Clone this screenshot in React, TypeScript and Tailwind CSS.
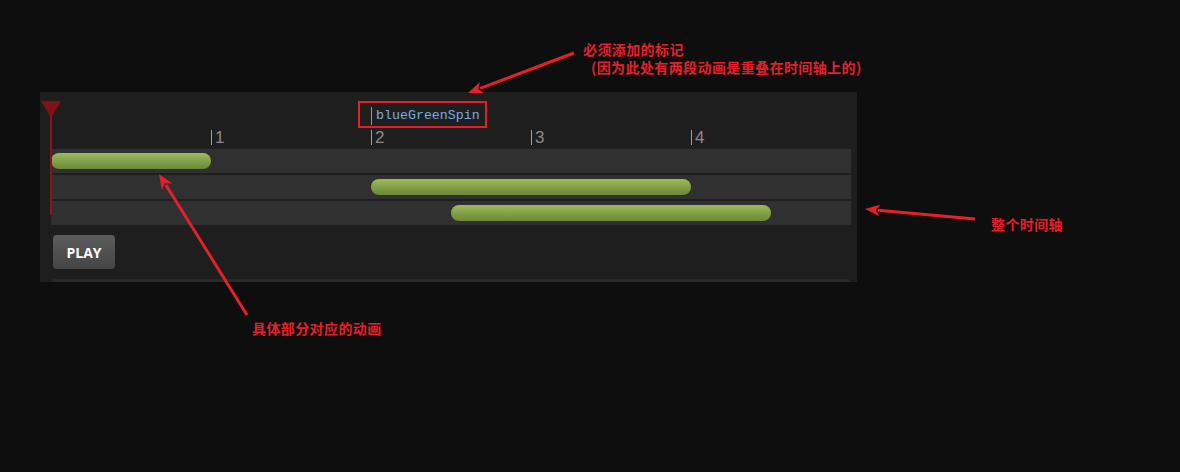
import React from "react";

const PX_PER_SEC = 160;

const tracks = [
  { start: 0, end: 1 },
  { start: 2, end: 4 },
  { start: 2.5, end: 4.5 },
];

const cjk = { fontFamily: '"Noto Sans CJK SC", "Noto Sans", sans-serif' };

const Arrow = ({ x1, y1, x2, y2 }: { x1: number; y1: number; x2: number; y2: number }) => {
  const a = Math.atan2(y2 - y1, x2 - x1);
  const len = 15;
  const w = 6;
  const bx = x2 - len * Math.cos(a);
  const by = y2 - len * Math.sin(a);
  const p1 = `${bx + w * Math.sin(a)},${by - w * Math.cos(a)}`;
  const p2 = `${bx - w * Math.sin(a)},${by + w * Math.cos(a)}`;
  const mx = x2 - (len - 4) * Math.cos(a);
  const my = y2 - (len - 4) * Math.sin(a);
  return (
    <g>
      <line x1={x1} y1={y1} x2={bx + 2 * Math.cos(a)} y2={by + 2 * Math.sin(a)} stroke="#e5202a" strokeWidth={3} />
      <polygon points={`${x2},${y2} ${p1} ${mx},${my} ${p2}`} fill="#e5202a" />
    </g>
  );
};

const App = () => {
  return (
    <div className="relative w-[1180px] h-[472px] bg-[#0e0e0e] pt-[92px] pl-[40px]">
      {/* timeline panel */}
      <div className="relative w-[817px] h-[190px] bg-[#1e1e1e] flex flex-col pl-[11px] pr-[6px]">
        <div className="relative h-[57px]">
          <div
            className="absolute left-[320px] top-[15px] flex items-center h-[18px] text-[13.3px] text-[#74aee0]"
            style={{ fontFamily: '"Liberation Mono", "DejaVu Sans Mono", monospace' }}
          >
            <span className="w-px h-[18px] bg-[#9a9a9a] mr-[4px]" />
            blueGreenSpin
          </div>
          {[1, 2, 3, 4].map((t) => (
            <div
              key={t}
              className="absolute top-[38px] flex items-center h-[14px] text-[17px] leading-none text-[#8a8a8a]"
              style={{ left: t * PX_PER_SEC, fontFamily: '"Liberation Sans", Arial, sans-serif' }}
            >
              <span className="w-px h-[15px] bg-[#a0a0a0] mr-[3px]" />
              {t}
            </div>
          ))}
        </div>

        <div className="flex flex-col gap-[2px]">
          {tracks.map((tr, i) => (
            <div key={i} className="h-[24px] bg-[#303030] flex items-center">
              <div
                className="h-[16px] rounded-full bg-gradient-to-b from-[#9dbc5a] to-[#6a8838]"
                style={{ marginLeft: tr.start * PX_PER_SEC, width: (tr.end - tr.start) * PX_PER_SEC }}
              />
            </div>
          ))}
        </div>

        <div className="mt-[10px] pl-[2px]">
          <button
            className="w-[62px] h-[34px] rounded-[4px] bg-gradient-to-b from-[#5c5c5c] to-[#454545] text-white text-[14px] font-bold"
            style={{ fontFamily: '"Open Sans", "Liberation Sans", sans-serif' }}
          >
            PLAY
          </button>
        </div>

        <div className="mt-[10px] ml-[1px] mr-[1px] h-[3px] rounded-t-[3px] bg-[#2a2a2a]" />

        {/* playhead */}
        <svg className="absolute left-[1px] top-[9px]" width="20" height="115" viewBox="0 0 20 115">
          <polygon points="0,0 20,0 10,17" fill="#7e1313" />
          <rect x="9" y="14" width="2" height="100" fill="#8a1616" />
        </svg>

        {/* marker box */}
        <div className="absolute left-[318px] top-[9px] w-[129px] h-[27px] border-2 border-[#e5202a]" />
      </div>

      {/* annotations */}
      <svg className="absolute left-0 top-0" width="1180" height="472">
        <Arrow x1={574} y1={53} x2={468} y2={93} />
        <Arrow x1={975} y1={219} x2={865} y2={209} />
        <Arrow x1={247} y1={315} x2={159} y2={174} />
      </svg>

      <div className="absolute left-[583px] top-[40px] text-[14px] font-bold leading-[18px] tracking-[0.4px] text-[#e5202a]" style={cjk}>
        必须添加的标记
      </div>
      <div className="absolute left-[591px] top-[58px] text-[14px] font-bold leading-[18px] tracking-[0.4px] text-[#e5202a]" style={cjk}>
        (因为此处有两段动画是重叠在时间轴上的)
      </div>
      <div className="absolute left-[991px] top-[215px] text-[14px] font-bold leading-[18px] tracking-[0.4px] text-[#e5202a]" style={cjk}>
        整个时间轴
      </div>
      <div className="absolute left-[252px] top-[319px] text-[14px] font-bold leading-[18px] tracking-[0.4px] text-[#e5202a]" style={cjk}>
        具体部分对应的动画
      </div>
    </div>
  );
};

export default App;
